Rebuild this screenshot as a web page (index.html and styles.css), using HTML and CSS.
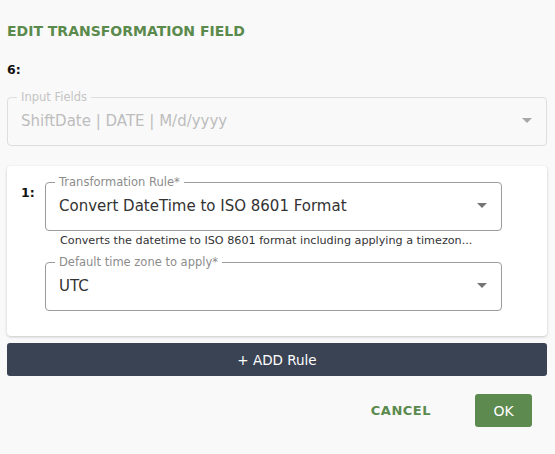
FILE: index.html
```html
<!DOCTYPE html>
<html>
<head>
<meta charset="utf-8">
<link rel="stylesheet" href="styles.css">
</head>
<body>
<div class="dialog">
  <h1 class="title">EDIT TRANSFORMATION FIELD</h1>
  <div class="field-num">6:</div>
  <fieldset class="outlined disabled">
    <legend>Input Fields</legend>
    <div class="select-row">
      <span class="value">ShiftDate | DATE | M/d/yyyy</span>
      <span class="caret"></span>
    </div>
  </fieldset>

  <div class="card">
    <div class="rule-num">1:</div>
    <div class="rule-body">
      <fieldset class="outlined">
        <legend>Transformation Rule*</legend>
        <div class="select-row">
          <span class="value">Convert DateTime to ISO 8601 Format</span>
          <span class="caret"></span>
        </div>
      </fieldset>
      <div class="helper">Converts the datetime to ISO 8601 format including applying a timezon...</div>
      <fieldset class="outlined">
        <legend>Default time zone to apply*</legend>
        <div class="select-row">
          <span class="value">UTC</span>
          <span class="caret"></span>
        </div>
      </fieldset>
    </div>
  </div>

  <button class="add-rule">+ ADD Rule</button>

  <div class="actions">
    <button class="btn-text">CANCEL</button>
    <button class="btn-ok">OK</button>
  </div>
</div>
</body>
</html>
```

FILE: styles.css
```css
* { box-sizing: border-box; }
html, body {
  margin: 0;
  background: #f9f9f9;
  font-family: "DejaVu Sans", sans-serif;
  color: #333;
}
.dialog {
  padding: 22px 8px 0 7px;
}
.title {
  margin: 0;
  font-size: 14px;
  line-height: 18px;
  font-weight: bold;
  color: #5b8a4d;
}
.field-num {
  margin-top: 23px;
  font-size: 12.5px;
  font-weight: bold;
  line-height: 14px;
  color: #111;
}
.outlined {
  margin: 0;
  padding: 0 14px 0 9px;
  border: 1px solid #9b9b9b;
  border-radius: 4px;
  height: 55px;
  min-width: 0;
}
.outlined legend {
  padding: 0 4px;
  font-size: 11.5px;
  line-height: 12px;
  color: #8c8c8c;
}
.select-row {
  display: flex;
  align-items: center;
  justify-content: space-between;
  height: 35px;
  padding-left: 4px;
}
.value {
  font-size: 15px;
  color: #333;
  white-space: nowrap;
}
.caret {
  width: 0;
  height: 0;
  border-left: 5px solid transparent;
  border-right: 5px solid transparent;
  border-top: 5px solid #757575;
}
.disabled {
  margin-top: 14px;
  border-color: #dedede;
}
.disabled legend { color: #c4c4c4; }
.disabled .value { color: #bdbdbd; }
.disabled .caret { border-top-color: #a8a8a8; }

.card {
  margin-top: 20px;
  background: #fff;
  border-radius: 4px;
  box-shadow: 0 1px 3px rgba(0,0,0,0.2);
  padding: 10px 45px 25px 14px;
  display: flex;
}
.rule-num {
  width: 24px;
  padding-top: 10px;
  font-size: 12.5px;
  line-height: 14px;
  font-weight: bold;
  color: #111;
}
.rule-body { flex: 1; min-width: 0; }
.helper {
  font-size: 11.2px;
  line-height: 14px;
  padding: 3px 0 0 15px;
  height: 25px;
  color: #333;
  white-space: nowrap;
}
.add-rule {
  display: block;
  width: 100%;
  margin-top: 7px;
  height: 33px;
  border: none;
  border-radius: 3px;
  background: #3a4354;
  color: #fff;
  font-family: inherit;
  font-size: 13.5px;
}
.actions {
  display: flex;
  justify-content: flex-end;
  align-items: center;
  margin-top: 18px;
  padding-right: 15px;
  gap: 44px;
}
.btn-text {
  background: none;
  border: none;
  padding: 0;
  font-family: inherit;
  font-weight: bold;
  font-size: 13px;
  letter-spacing: 0.5px;
  color: #5b8a4d;
}
.btn-ok {
  width: 57px;
  height: 33px;
  border: none;
  border-radius: 3px;
  background: #5d8a4f;
  color: #fff;
  font-family: inherit;
  font-size: 14px;
}
```
